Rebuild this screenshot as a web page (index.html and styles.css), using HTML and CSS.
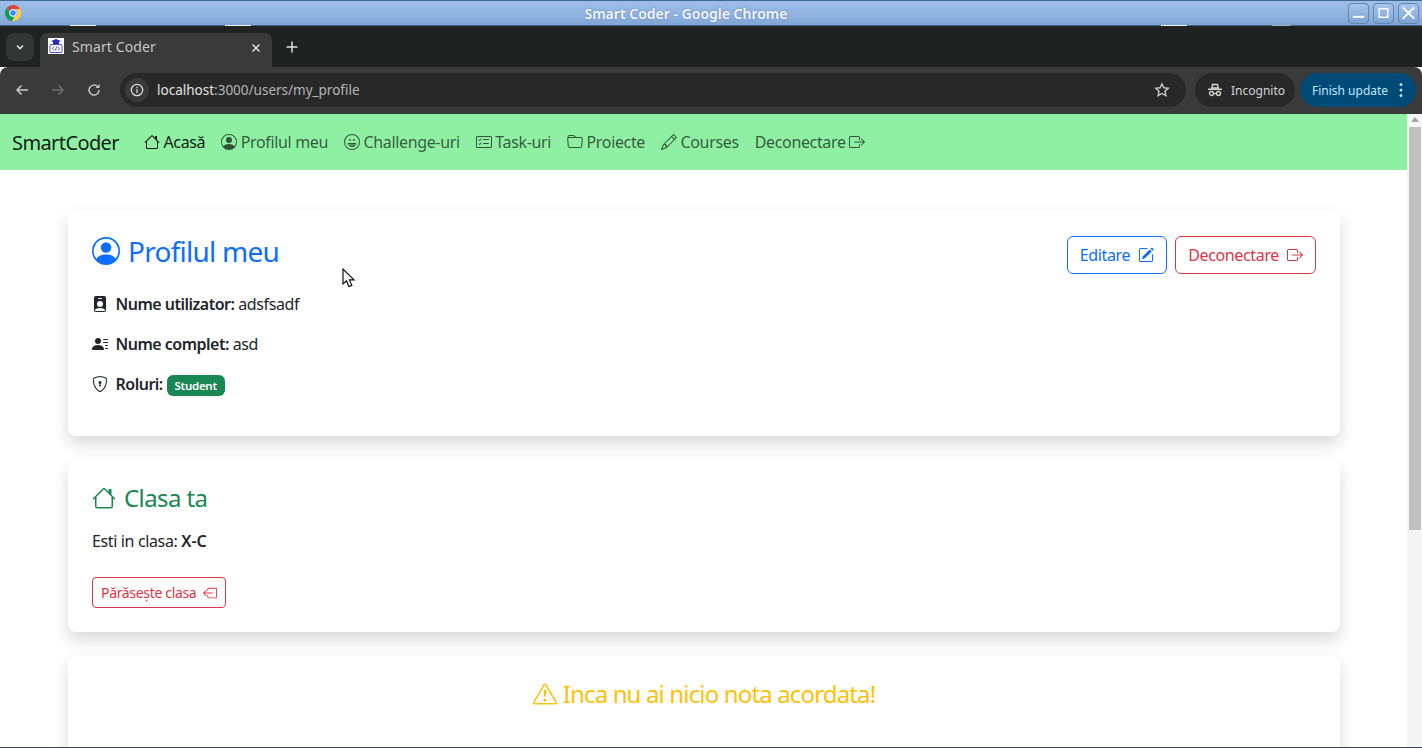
FILE: index.html
```html
<!DOCTYPE html>
<html lang="en">
<head>
  <meta charset="UTF-8" />
  <title>Smart Coder</title>
  <link rel="stylesheet" href="styles.css">
</head>
<body>
<svg class="sprite" xmlns="http://www.w3.org/2000/svg">
  <symbol id="i-house" viewBox="0 0 16 16"><path d="M8.707 1.5a1 1 0 0 0-1.414 0L.646 8.146a.5.5 0 0 0 .708.708L2 8.207V13.5A1.5 1.5 0 0 0 3.5 15h9a1.5 1.5 0 0 0 1.5-1.5V8.207l.646.647a.5.5 0 0 0 .708-.708L13 5.793V2.5a.5.5 0 0 0-.5-.5h-1a.5.5 0 0 0-.5.5v1.293zM13 7.207V13.5a.5.5 0 0 1-.5.5h-9a.5.5 0 0 1-.5-.5V7.207l5-5z"/></symbol>
  <symbol id="i-person" viewBox="0 0 16 16"><path d="M11 6a3 3 0 1 1-6 0 3 3 0 0 1 6 0"/><path fill-rule="evenodd" d="M0 8a8 8 0 1 1 16 0A8 8 0 0 1 0 8m8-7a7 7 0 0 0-5.468 11.37C3.242 11.226 4.805 10 8 10s4.757 1.225 5.468 2.37A7 7 0 0 0 8 1"/></symbol>
  <symbol id="i-emoji" viewBox="0 0 16 16"><path d="M8 15A7 7 0 1 1 8 1a7 7 0 0 1 0 14m0 1A8 8 0 1 0 8 0a8 8 0 0 0 0 16"/><path d="M12.331 9.5a1 1 0 0 1 0 1A5 5 0 0 1 8 13a5 5 0 0 1-4.33-2.5A1 1 0 0 1 4.535 9h6.93a1 1 0 0 1 .866.5M7 6.5c0 .828-.448 0-1 0s-1 .828-1 0S5.448 5 6 5s1 .672 1 1.5m4 0c0 .828-.448 0-1 0s-1 .828-1 0S9.448 5 10 5s1 .672 1 1.5"/><path d="M3.500 10.800h9" stroke="#8ff0a4" stroke-width=".7"/></symbol>
  <symbol id="i-tasks" viewBox="0 0 16 16"><path d="M14.5 3a.5.5 0 0 1 .5.5v9a.5.5 0 0 1-.5.5h-13a.5.5 0 0 1-.5-.5v-9a.5.5 0 0 1 .5-.5zm-13-1A1.5 1.5 0 0 0 0 3.5v9A1.5 1.5 0 0 0 1.5 14h13a1.5 1.5 0 0 0 1.5-1.5v-9A1.5 1.5 0 0 0 14.5 2z"/><path d="M7 5.5a.5.5 0 0 1 .5-.5h5a.5.5 0 0 1 0 1h-5a.5.5 0 0 1-.5-.5m-1.496-.854a.5.5 0 0 1 0 .708l-1.5 1.5a.5.5 0 0 1-.708 0l-.5-.5a.5.5 0 1 1 .708-.708l.146.147 1.146-1.147a.5.5 0 0 1 .708 0M7 9.5a.5.5 0 0 1 .5-.5h5a.5.5 0 0 1 0 1h-5a.5.5 0 0 1-.5-.5m-1.496-.854a.5.5 0 0 1 0 .708l-1.5 1.5a.5.5 0 0 1-.708 0l-.5-.5a.5.5 0 0 1 .708-.708l.146.147 1.146-1.147a.5.5 0 0 1 .708 0"/></symbol>
  <symbol id="i-folder" viewBox="0 0 16 16"><path d="M.54 3.87.5 3a2 2 0 0 1 2-2h3.672a2 2 0 0 1 1.414.586l.828.828A2 2 0 0 0 9.828 3h3.982a2 2 0 0 1 1.992 2.181l-.637 7A2 2 0 0 1 13.174 14H2.826a2 2 0 0 1-1.991-1.819l-.637-7a2 2 0 0 1 .342-1.31zM2.19 4a1 1 0 0 0-.996 1.09l.637 7a1 1 0 0 0 .995.91h10.348a1 1 0 0 0 .995-.91l.637-7A1 1 0 0 0 13.81 4zm4.69-1.707A1 1 0 0 0 6.172 2H2.5a1 1 0 0 0-1 .981l.006.139q.323-.119.684-.12h5.396z"/></symbol>
  <symbol id="i-pencil" viewBox="0 0 16 16"><path d="M12.146.146a.5.5 0 0 1 .708 0l3 3a.5.5 0 0 1 0 .708l-10 10a.5.5 0 0 1-.168.11l-5 2a.5.5 0 0 1-.65-.65l2-5a.5.5 0 0 1 .11-.168zM11.207 2.5 13.5 4.793 14.793 3.5 12.5 1.207zm1.586 3L10.5 3.207 4 9.707V10h.5a.5.5 0 0 1 .5.5v.5h.5a.5.5 0 0 1 .5.5v.5h.293zm-9.761 5.175-.106.106-1.528 3.821 3.821-1.528.106-.106A.5.5 0 0 1 5 12.5V12h-.5a.5.5 0 0 1-.5-.5V11h-.5a.5.5 0 0 1-.468-.325"/></symbol>
  <symbol id="i-logout" viewBox="0 0 16 16"><path fill-rule="evenodd" d="M10 12.5a.5.5 0 0 1-.5.5h-8a.5.5 0 0 1-.5-.5v-9a.5.5 0 0 1 .5-.5h8a.5.5 0 0 1 .5.5v2a.5.5 0 0 0 1 0v-2A1.5 1.5 0 0 0 9.5 2h-8A1.5 1.5 0 0 0 0 3.5v9A1.5 1.5 0 0 0 1.5 14h8a1.5 1.5 0 0 0 1.5-1.5v-2a.5.5 0 0 0-1 0z"/><path fill-rule="evenodd" d="M15.854 8.354a.5.5 0 0 0 0-.708l-3-3a.5.5 0 0 0-.708.708L14.293 7.5H5.5a.5.5 0 0 0 0 1h8.793l-2.147 2.146a.5.5 0 0 0 .708.708z"/></symbol>
  <symbol id="i-leave" viewBox="0 0 16 16"><path fill-rule="evenodd" d="M6 12.5a.5.5 0 0 0 .5.5h8a.5.5 0 0 0 .5-.5v-9a.5.5 0 0 0-.5-.5h-8a.5.5 0 0 0-.5.5v2a.5.5 0 0 1-1 0v-2A1.5 1.5 0 0 1 6.5 2h8A1.5 1.5 0 0 1 16 3.5v9a1.5 1.5 0 0 1-1.5 1.5h-8A1.5 1.5 0 0 1 5 12.5v-2a.5.5 0 0 1 1 0z"/><path fill-rule="evenodd" d="M.146 8.354a.5.5 0 0 1 0-.708l3-3a.5.5 0 1 1 .708.708L1.707 7.5H10.5a.5.5 0 0 1 0 1H1.707l2.147 2.146a.5.5 0 0 1-.708.708z"/></symbol>
  <symbol id="i-edit" viewBox="0 0 16 16"><path d="M15.502 1.94a.5.5 0 0 1 0 .706L14.459 3.69l-2-2L13.502.646a.5.5 0 0 1 .707 0l1.293 1.293zm-1.75 2.456-2-2L4.939 9.21a.5.5 0 0 0-.121.196l-.805 2.414a.25.25 0 0 0 .316.316l2.414-.805a.5.5 0 0 0 .196-.12l6.813-6.814z"/><path fill-rule="evenodd" d="M1 13.5A1.5 1.5 0 0 0 2.5 15h11a1.5 1.5 0 0 0 1.5-1.5v-6a.5.5 0 0 0-1 0v6a.5.5 0 0 1-.5.5h-11a.5.5 0 0 1-.5-.5v-11a.5.5 0 0 1 .5-.5H9a.5.5 0 0 0 0-1H2.5A1.5 1.5 0 0 0 1 2.5z"/></symbol>
  <symbol id="i-badge" viewBox="0 0 16 16"><path d="M2 2a2 2 0 0 1 2-2h8a2 2 0 0 1 2 2v12a2 2 0 0 1-2 2H4a2 2 0 0 1-2-2zm4.5 0a.5.5 0 0 0 0 1h3a.5.5 0 0 0 0-1zM8 11a3 3 0 1 0 0-6 3 3 0 0 0 0 6m5 2.755C12.146 12.825 10.623 12 8 12s-4.146.826-5 1.755V14a1 1 0 0 0 1 1h8a1 1 0 0 0 1-1z"/></symbol>
  <symbol id="i-lines" viewBox="0 0 16 16"><path d="M6 8a3 3 0 1 0 0-6 3 3 0 0 0 0 6m-5 6s-1 0-1-1 1-4 6-4 6 3 6 4-1 1-1 1zM11 3.5a.5.5 0 0 1 .5-.5h4a.5.5 0 0 1 0 1h-4a.5.5 0 0 1-.5-.5m.5 2.5a.5.5 0 0 0 0 1h4a.5.5 0 0 0 0-1zm2 3a.5.5 0 0 0 0 1h2a.5.5 0 0 0 0-1zm0 3a.5.5 0 0 0 0 1h2a.5.5 0 0 0 0-1z"/></symbol>
  <symbol id="i-shield" viewBox="0 0 16 16"><path d="M5.338 1.59a61 61 0 0 0-2.837.856.48.48 0 0 0-.328.39c-.554 4.157.726 7.19 2.253 9.188a10.7 10.7 0 0 0 2.287 2.233c.346.244.652.42.893.533q.18.085.293.118a1 1 0 0 0 .101.025 1 1 0 0 0 .1-.025q.114-.034.294-.118c.24-.113.547-.29.893-.533a10.7 10.7 0 0 0 2.287-2.233c1.527-1.997 2.807-5.031 2.253-9.188a.48.48 0 0 0-.328-.39c-.651-.213-1.75-.56-2.837-.855C9.552 1.29 8.531 1.067 8 1.067c-.53 0-1.552.223-2.662.524zM5.072.56C6.157.265 7.31 0 8 0s1.843.265 2.928.56c1.11.3 2.229.655 2.887.87a1.54 1.54 0 0 1 1.044 1.262c.596 4.477-.787 7.795-2.465 9.99a11.8 11.8 0 0 1-2.517 2.453 7 7 0 0 1-1.048.625c-.28.132-.581.24-.829.24s-.548-.108-.829-.24a7 7 0 0 1-1.048-.625 11.8 11.8 0 0 1-2.517-2.453C1.928 10.487.545 7.169 1.141 2.692A1.54 1.54 0 0 1 2.185 1.43 63 63 0 0 1 5.072.56"/><path d="M9.5 6.5a1.5 1.5 0 0 1-1 1.415l.385 1.99a.5.5 0 0 1-.491.595h-.788a.5.5 0 0 1-.49-.595l.384-1.99a1.5 1.5 0 1 1 2-1.415"/></symbol>
  <symbol id="i-warn" viewBox="0 0 16 16"><path d="M7.938 2.016A.13.13 0 0 1 8.002 2a.13.13 0 0 1 .063.016.15.15 0 0 1 .054.057l6.857 11.667c.036.06.035.124.002.183a.2.2 0 0 1-.054.06.1.1 0 0 1-.066.017H1.146a.1.1 0 0 1-.066-.017.2.2 0 0 1-.054-.06.18.18 0 0 1 .002-.183L7.884 2.073a.15.15 0 0 1 .054-.057m1.044-.45a1.13 1.13 0 0 0-1.96 0L.165 13.233c-.457.778.091 1.767.98 1.767h13.713c.889 0 1.438-.99.98-1.767z"/><path d="M7.002 12a1 1 0 1 1 2 0 1 1 0 0 1-2 0M7.1 5.995a.905.905 0 1 1 1.8 0l-.35 3.507a.552.552 0 0 1-1.1 0z"/></symbol>
</svg>

<div class="titlebar">
  <svg class="chrome-logo" viewBox="0 0 16 16" width="16" height="16">
    <path fill="#db4437" d="M8 0a8 8 0 0 1 6.93 4H8a4 4 0 0 0-3.6 2.3L1.9 2.8A8 8 0 0 1 8 0z"/>
    <path fill="#0f9d58" d="M1.9 2.8l3 5.4A3.6 3.6 0 0 0 9 11.9L7 16A8 8 0 0 1 1.9 2.8z"/>
    <path fill="#ffcd40" d="M14.93 4A8 8 0 0 1 7 16l3.4-5A4 4 0 0 0 11 4z"/>
    <circle cx="8" cy="8" r="3.3" fill="#4285f4" stroke="#fff" stroke-width="1"/>
  </svg>
  <span class="title-text">Smart Coder - Google Chrome</span>
  <div class="win-buttons">
    <span class="win-btn"><svg viewBox="0 0 20 20" width="20" height="20"><rect x="4" y="13" width="12" height="2" fill="#fff"/></svg></span>
    <span class="win-btn"><svg viewBox="0 0 20 20" width="20" height="20"><rect x="5.5" y="5.5" width="9" height="9" fill="none" stroke="#fff" stroke-width="1.5"/></svg></span>
    <span class="win-btn"><svg viewBox="0 0 20 20" width="20" height="20"><path d="M4 4l12 12M16 4L4 16" stroke="#fff" stroke-width="2"/></svg></span>
  </div>
  <span class="glint glint-a"></span>
  <span class="glint glint-b"></span>
  <span class="glint glint-c"></span>
  <span class="glint glint-d"></span>
</div>

<div class="tabstrip">
  <span class="tab-search"><svg viewBox="0 0 12 12" width="12" height="12"><path d="M3 4.5l3 3 3-3" fill="none" stroke="#dfe1e3" stroke-width="1.6"/></svg></span>
  <div class="tab">
    <svg class="favicon" viewBox="0 0 16 16" width="16" height="16">
      <rect width="16" height="16" fill="#fff"/>
      <path d="M8 1l5 2-5 2-5-2z" fill="#2a2ab0"/>
      <rect x="5" y="4" width="6" height="2" fill="#2a2ab0"/>
      <rect x="2" y="6.500" width="12" height="8" rx="1" fill="none" stroke="#4a4ad0"/>
      <path d="M6 8.500L4.500 10.500 6 12.500M10 8.500l1.500 2-1.500 2M8.600 8.500l-1.200 4" fill="none" stroke="#2a2ab0" stroke-width=".8"/>
    </svg>
    <span class="tab-title">Smart Coder</span>
    <svg class="tab-close" viewBox="0 0 10 10" width="10" height="10"><path d="M1.500 1.500l7 7M8.500 1.500l-7 7" stroke="#e3e3e3" stroke-width="1.500"/></svg>
  </div>
  <svg class="new-tab" viewBox="0 0 12 12" width="12" height="12"><path d="M6 .5v11M.5 6h11" stroke="#dfe1e3" stroke-width="1.500"/></svg>
</div>

<div class="toolbar">
  <svg class="tool-icon" viewBox="0 0 16 16" width="16" height="16"><path d="M14 8H3M7.500 3.500L3 8l4.500 4.500" fill="none" stroke="#c7c7c7" stroke-width="1.500"/></svg>
  <svg class="tool-icon" viewBox="0 0 16 16" width="16" height="16"><path d="M2 8h11M8.500 3.500L13 8l-4.500 4.500" fill="none" stroke="#6f6f6f" stroke-width="1.500"/></svg>
  <svg class="tool-icon" viewBox="0 0 16 16" width="16" height="16"><path d="M13 8a5 5 0 1 1-1.500-3.500" fill="none" stroke="#c7c7c7" stroke-width="1.500"/><path d="M13.500 2v4h-4z" fill="#c7c7c7"/></svg>
  <div class="omnibox">
    <span class="site-info"><svg viewBox="0 0 16 16" width="14" height="14"><circle cx="8" cy="8" r="6.500" fill="none" stroke="#dcdcdc" stroke-width="1.400"/><rect x="7.300" y="7" width="1.400" height="4.500" fill="#dcdcdc"/><rect x="7.300" y="4.300" width="1.400" height="1.500" fill="#dcdcdc"/></svg></span>
    <span class="url">localhost<span class="url-path">:3000/users/my_profile</span></span>
    <svg class="star" viewBox="0 0 16 16" width="16" height="16"><path d="M8 1.800l1.900 4 4.300.5-3.200 3 .9 4.300L8 11.500l-3.900 2.100.9-4.300-3.200-3 4.300-.5z" fill="none" stroke="#c7c7c7" stroke-width="1.400"/></svg>
  </div>
  <div class="incognito">
    <svg viewBox="0 0 16 16" width="16" height="16"><path d="M5.500 2.500h5l.8 3.500H4.700z" fill="none" stroke="#d5d5d5" stroke-width="1.300"/><path d="M1 7.300h14" stroke="#d5d5d5" stroke-width="1.500"/><circle cx="4.500" cy="11.500" r="2" fill="none" stroke="#d5d5d5" stroke-width="1.300"/><circle cx="11.500" cy="11.500" r="2" fill="none" stroke="#d5d5d5" stroke-width="1.300"/><path d="M6.500 11.500h3" stroke="#d5d5d5" stroke-width="1.300"/></svg>
    <span>Incognito</span>
  </div>
  <div class="update">
    <span>Finish update</span>
    <svg viewBox="0 0 4 16" width="4" height="16"><circle cx="2" cy="2.500" r="1.500" fill="#b8dcf5"/><circle cx="2" cy="8" r="1.500" fill="#b8dcf5"/><circle cx="2" cy="13.500" r="1.500" fill="#b8dcf5"/></svg>
  </div>
</div>

<div class="viewport">
  <div class="page">
    <nav class="navbar">
      <a class="brand">SmartCoder</a>
      <a class="nav-link active"><svg class="bi"><use href="#i-house"/></svg>Acasă</a>
      <a class="nav-link"><svg class="bi"><use href="#i-person"/></svg>Profilul meu</a>
      <a class="nav-link"><svg class="bi"><use href="#i-emoji"/></svg>Challenge-uri</a>
      <a class="nav-link"><svg class="bi"><use href="#i-tasks"/></svg>Task-uri</a>
      <a class="nav-link"><svg class="bi"><use href="#i-folder"/></svg>Proiecte</a>
      <a class="nav-link"><svg class="bi"><use href="#i-pencil"/></svg>Courses</a>
      <a class="nav-link">Deconectare<svg class="bi"><use href="#i-logout"/></svg></a>
    </nav>

    <main class="content">
      <section class="card card-profile">
        <div class="profile-head">
          <h2 class="profile-title"><svg class="bi"><use href="#i-person"/></svg>Profilul meu</h2>
          <div class="actions">
            <a class="btn btn-blue">Editare<svg class="bi"><use href="#i-edit"/></svg></a>
            <a class="btn btn-red">Deconectare<svg class="bi"><use href="#i-logout"/></svg></a>
          </div>
        </div>
        <p class="row"><svg class="bi row-icon"><use href="#i-badge"/></svg><strong>Nume utilizator:</strong> adsfsadf</p>
        <p class="row"><svg class="bi row-icon"><use href="#i-lines"/></svg><strong>Nume complet:</strong> asd</p>
        <p class="row"><svg class="bi row-icon"><use href="#i-shield"/></svg><strong>Roluri:</strong> <span class="badge">Student</span></p>
      </section>

      <section class="card card-class">
        <h4 class="class-title"><svg class="bi"><use href="#i-house"/></svg>Clasa ta</h4>
        <p class="class-line">Esti in clasa: <strong>X-C</strong></p>
        <a class="btn btn-red btn-sm">Părăsește clasa<svg class="bi"><use href="#i-leave"/></svg></a>
      </section>

      <section class="card card-grades">
        <h4 class="grades-title"><svg class="bi"><use href="#i-warn"/></svg>Inca nu ai nicio nota acordata!</h4>
      </section>
    </main>
  </div>

  <div class="scrollbar">
    <span class="scroll-arrow"></span>
    <span class="scroll-thumb"></span>
  </div>
</div>

<svg class="cursor" viewBox="0 0 14 22" width="14" height="22"><path d="M1 1v15l3.500-3.200 2.300 5.700 3-1.200-2.400-5.500H12z" fill="#fff" stroke="#111" stroke-width="1.200"/></svg>
<div class="screen-edge"></div>
</body>
</html>
```

FILE: styles.css
```css
* { box-sizing: border-box; }
html, body { height: 100%; }
body { margin: 0; height: 748px; overflow: hidden; font-family: "Noto Sans", sans-serif; font-size: 16px; color: #212529; background: #fff; position: relative; }
.sprite { display: none; }
.bi { width: 16px; height: 16px; fill: currentColor; flex: none; }

/* window chrome */
.titlebar { height: 26px; display: flex; align-items: center; padding: 0 3px 0 5px; position: relative; background: linear-gradient(#9ebfe8, #8cb0dd 70%, #7ea4d2); border-top: 1px solid #3f6a94; border-bottom: 1px solid #3f6a94; }
.title-text { position: absolute; left: 0; right: 50px; text-align: center; font-weight: 600; font-size: 14px; color: #f4f7fb; text-shadow: 0 0 2px #5f7fa8; }
.win-buttons { margin-left: auto; display: flex; gap: 4px; position: relative; }
.win-btn { width: 21px; height: 21px; border: 1px solid #5f86b5; border-radius: 4px; display: flex; align-items: center; justify-content: center; background: linear-gradient(#a9c6ea, #7ea3d2); }
.glint { position: absolute; bottom: -1px; height: 1px; background: #f2f5f8; }
.glint-a { left: 70px; width: 26px; }
.glint-b { left: 225px; width: 26px; }
.glint-c { left: 1161px; width: 26px; }
.glint-d { left: 1272px; width: 18px; background: #a9aeb3; }

.tabstrip { height: 41px; background: #202221; display: flex; align-items: flex-end; padding-left: 6px; }
.tab-search { width: 28px; height: 28px; margin-bottom: 6px; border-radius: 8px; background: #343636; display: flex; align-items: center; justify-content: center; }
.tab { width: 232px; height: 34px; margin-left: 6px; padding: 0 11px 8px 8px; background: #3a3a3a; border-radius: 8px 8px 0 0; display: flex; align-items: center; font-size: 14px; color: #c7c7c7; }
.tab-title { margin-left: 8px; letter-spacing: 0.1px; }
.tab-close { margin-left: auto; margin-top: 4px; }
.new-tab { margin: 0 0 14px 14px; }

.toolbar { height: 47px; background: #3a3a3a; display: flex; align-items: center; padding: 0 6px 1px 14px; border-radius: 8px 8px 0 0; }
.tool-icon { margin-right: 20px; }
.tool-icon:nth-child(3) { margin-right: 18px; }
.omnibox { width: 1066px; height: 34px; background: #282828; border-radius: 17px; display: flex; align-items: center; padding: 0 16px 0 5px; font-size: 13.500px; color: #e3e3e3; }
.site-info { width: 24px; height: 24px; border-radius: 12px; background: #3a3a3a; display: flex; align-items: center; justify-content: center; }
.url { margin-left: 8px; }
.url-path { color: #b5b5b5; }
.star { margin-left: auto; }
.incognito { width: 100px; height: 34px; margin-left: 9px; border-radius: 17px; background: #282828; display: flex; align-items: center; gap: 8px; padding-left: 12px; font-size: 12px; color: #d5d5d5; }
.update { width: 116px; height: 34px; margin-left: 5px; border-radius: 17px; background: #004a77; display: flex; align-items: center; justify-content: space-between; padding: 0 13px 0 12px; font-size: 12px; color: #c2e7ff; }

/* page */
.viewport { height: 634px; display: flex; overflow: hidden; }
.page { flex: 1; min-width: 0; height: 634px; overflow: hidden; }
.navbar { height: 56px; background: #8ff0a4; display: flex; align-items: center; padding: 0 12px; }
.brand { font-size: 20px; letter-spacing: -0.6px; color: rgba(0, 0, 0, .9); margin-right: 17px; }
.nav-link { padding: 8px; display: flex; align-items: center; gap: 3.5px; line-height: 24px; letter-spacing: -0.35px; color: rgba(0, 0, 0, .65); }
.nav-link.active { color: rgba(0, 0, 0, .9); }

.content { padding: 40px 67px 0 68px; display: flex; flex-direction: column; gap: 24px; }
.card { background: #fff; border-radius: 8px; padding: 24px; box-shadow: 0 8px 16px rgba(0, 0, 0, .15); }
.card-profile { height: 226px; padding-top: 24px; }
.profile-head { display: flex; justify-content: space-between; align-items: flex-start; margin-bottom: 18px; }
.profile-title { margin: 0; font-size: 28px; font-weight: 400; line-height: 34px; letter-spacing: -0.75px; color: #0d6efd; display: flex; align-items: center; gap: 8px; }
.profile-title .bi { width: 28px; height: 28px; }
.actions { display: flex; gap: 8px; padding-top: 2px; }
.btn { display: inline-flex; align-items: center; gap: 8px; border: 1px solid; border-radius: 6px; padding: 6px 12px; line-height: 24px; letter-spacing: -0.35px; background: #fff; }
.btn-blue { color: #0d6efd; border-color: #0d6efd; }
.btn-red { color: #dc3545; border-color: #dc3545; }
.btn-sm { font-size: 14px; padding: 4px 8px; gap: 7px; line-height: 21px; letter-spacing: -0.33px; border-radius: 4px; }
.btn-sm .bi { width: 14px; height: 14px; }
.row { margin: 0 0 16px; line-height: 24px; letter-spacing: -0.37px; }
.row-icon { margin-right: 7.5px; vertical-align: -2px; }
.row strong { font-weight: 600; letter-spacing: -0.5px; }
.badge { display: inline-block; background: #198754; color: #fff; font-size: 11.500px; font-weight: 600; line-height: 13px; letter-spacing: -0.3px; padding: 4px 8px; border-radius: 6px; }

.card-class { height: 172px; }
.class-title { margin: 0 0 17px; font-size: 24px; font-weight: 400; line-height: 28px; letter-spacing: -0.6px; color: #198754; display: flex; align-items: center; gap: 8px; }
.class-title .bi { width: 24px; height: 24px; }
.class-line { margin: 0 0 24px; line-height: 24px; letter-spacing: -0.36px; }
.class-line strong { font-weight: 600; letter-spacing: 0; }

.card-grades { height: 200px; flex: none; }
.grades-title { margin: 0; font-size: 24px; font-weight: 400; line-height: 27px; letter-spacing: -0.85px; color: #ffc107; display: flex; align-items: center; justify-content: center; gap: 6px; }
.grades-title .bi { width: 24px; height: 24px; }

.scrollbar { width: 15px; background: #f5f5f5; display: flex; flex-direction: column; align-items: center; padding-top: 3px; }
.scroll-arrow { width: 0; height: 0; border: 4px solid transparent; border-top: 0; border-bottom: 5px solid #a3a3a3; }
.scroll-thumb { width: 12px; height: 403px; margin-top: 5px; background: #c1c1c1; }

/* over the page */
.cursor { position: absolute; left: 342px; top: 268px; }
.screen-edge { position: absolute; left: 0; right: 0; bottom: 0; height: 1px; background: #3c4a5c; }
```
